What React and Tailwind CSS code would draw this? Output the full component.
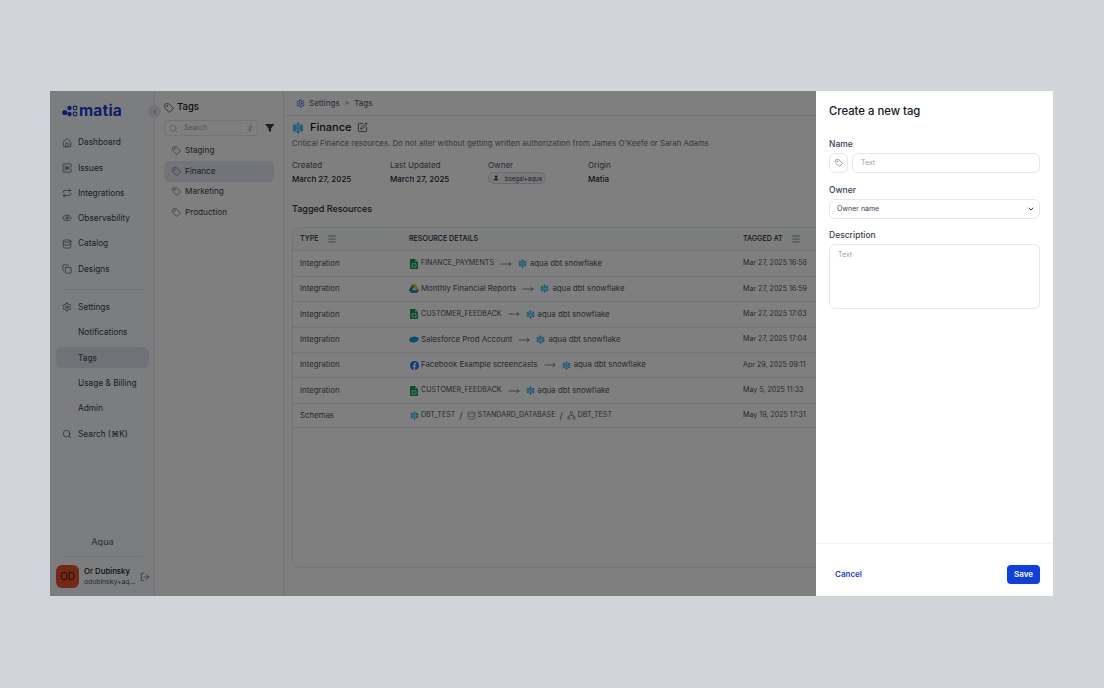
import { Home, ServerCog, Repeat, Eye, Database, Copy, Settings, Search, Tag, LogOut, SquarePen, Menu, MoveRight, ChevronLeft, ChevronDown, Network, User } from 'lucide-react'

const navTop = [
  { name: 'Dashboard', icon: Home },
  { name: 'Issues', icon: ServerCog },
  { name: 'Integrations', icon: Repeat },
  { name: 'Observability', icon: Eye },
  { name: 'Catalog', icon: Database },
  { name: 'Designs', icon: Copy },
]

const navBottom = [
  { name: 'Settings', icon: Settings },
  { name: 'Notifications' },
  { name: 'Tags', active: true },
  { name: 'Usage & Billing' },
  { name: 'Admin' },
  { name: 'Search (⌘K)', icon: Search },
]

const tags = ['Staging', 'Finance', 'Marketing', 'Production']

const rows = [
  { type: 'Integration', icon: 'sheets', name: 'FINANCE_PAYMENTS', caps: true, at: 'Mar 27, 2025 16:58' },
  { type: 'Integration', icon: 'drive', name: 'Monthly Financial Reports', at: 'Mar 27, 2025 16:59' },
  { type: 'Integration', icon: 'sheets', name: 'CUSTOMER_FEEDBACK', caps: true, at: 'Mar 27, 2025 17:03' },
  { type: 'Integration', icon: 'salesforce', name: 'Salesforce Prod Account', at: 'Mar 27, 2025 17:04' },
  { type: 'Integration', icon: 'facebook', name: 'Facebook Example screencasts', at: 'Apr 29, 2025 09:11' },
  { type: 'Integration', icon: 'sheets', name: 'CUSTOMER_FEEDBACK', caps: true, at: 'May 5, 2025 11:33' },
]

function SnowflakeIcon({ className }) {
  return (
    <svg viewBox="0 0 24 24" className={className} fill="none" stroke="#29b5e8" strokeWidth="3.2" strokeLinecap="round" strokeLinejoin="round">
      <path d="M12 2v6M12 16v6M3.300 7l5 3M15.700 14l5 3M3.300 17l5-3M15.700 10l5-3" />
      <path d="M12 10l2 2-2 2-2-2z" strokeWidth="1.800" />
      <path d="M8.500 4l3.500 3 3.500-3M8.500 20l3.500-3 3.500 3M2.500 11l4.500-1-1.500-4.500M21.500 13l-4.500 1 1.500 4.500M2.500 13l4.500 1-1.500 4.500M21.500 11l-4.500-1 1.500-4.500" strokeWidth="2" />
    </svg>
  )
}

function SourceIcon({ kind }) {
  if (kind === 'sheets') {
    return (
      <svg viewBox="0 0 16 20" className="w-[8px] h-[10px] shrink-0">
        <path d="M0 1.500A1.500 1.500 0 0 1 1.500 0H10l6 6v12.500a1.500 1.500 0 0 1-1.500 1.500h-13A1.500 1.500 0 0 1 0 18.500z" fill="#0f9d58" />
        <path d="M10 0l6 6h-6z" fill="#87ceac" />
        <path d="M4 9.500h8v6.500H4z" fill="none" stroke="#fff" strokeWidth="1.500" />
      </svg>
    )
  }
  if (kind === 'drive') {
    return (
      <svg viewBox="0 0 24 21" className="w-[10px] h-[9px] shrink-0">
        <path d="M8 0h8l8 14h-8z" fill="#ffba00" />
        <path d="M8 0l4 7-7.500 14L0 14z" fill="#00a85d" />
        <path d="M8 14h16l-4.500 7h-15z" fill="#2684fc" />
      </svg>
    )
  }
  if (kind === 'salesforce') {
    return (
      <svg viewBox="0 0 24 16" className="w-[10px] h-[7px] shrink-0">
        <path d="M10 2.500A4.500 4.500 0 0 1 17 2a5 5 0 0 1 2.500 9.800A3.600 3.600 0 0 1 14.500 13.500 4 4 0 0 1 7.500 14 3.800 3.800 0 0 1 2 11 4 4 0 0 1 3.500 4 4.500 4.500 0 0 1 10 2.500z" fill="#00a1e0" />
      </svg>
    )
  }
  return (
    <svg viewBox="0 0 20 20" className="w-[9px] h-[9px] shrink-0">
      <circle cx="10" cy="10" r="10" fill="#1877f2" />
      <path d="M13.500 12.800l.500-2.800h-2.700V8.200c0-.8.400-1.500 1.600-1.500H14V4.300s-1.100-.2-2.200-.2c-2.200 0-3.600 1.300-3.600 3.800V10H5.800v2.800h2.400V20h3.100v-7.200z" fill="#fff" />
    </svg>
  )
}

function Target() {
  return (
    <span className="flex items-center gap-[3px]">
      <SnowflakeIcon className="w-[9px] h-[9px]" />
      aqua dbt snowflake
    </span>
  )
}

function Sidebar() {
  const item = (n) => {
    const Icon = n.icon
    return (
      <div
        key={n.name}
        className={`h-[21px] mb-[4.300px] pl-[6px] rounded-md flex items-center gap-[6px] text-[8.300px] text-[#374151] ${n.active ? 'bg-[#e0e4f0]' : ''}`}
      >
        <span className="w-[10px] flex justify-center">
          {Icon && <Icon className="w-[10px] h-[10px]" strokeWidth={1.5} />}
        </span>
        {n.name}
      </div>
    )
  }
  return (
    <aside className="w-[105px] shrink-0 bg-[#f8fafc] border-r border-[#e5e7eb] flex flex-col pl-[6px] pr-[5px] relative">
      <div className="h-[40px] mb-[1px] flex items-center gap-[1px] pl-[6px]">
        <svg viewBox="0 0 16 12" className="w-[16px] h-[12px]" fill="#1d3fd1">
          <circle cx="2.800" cy="7.500" r="2.600" />
          <circle cx="7.500" cy="3" r="2.200" />
          <circle cx="7.500" cy="9" r="2.200" />
          <circle cx="13" cy="3" r="1.900" fill="none" stroke="#1d3fd1" strokeWidth="1.100" />
          <circle cx="13" cy="9" r="1.900" fill="none" stroke="#1d3fd1" strokeWidth="1.100" />
        </svg>
        <span className="text-[15.500px] font-bold leading-none text-[#1d3fd1] tracking-[0.2px]">matia</span>
      </div>
      <div>{navTop.map(item)}</div>
      <div className="h-px bg-[#e5e7eb] mx-[7px] mt-[5px] mb-[7px]" />
      <div>{navBottom.map(item)}</div>
      <div className="mt-auto flex flex-col">
        <div className="text-center text-[9px] font-medium text-[#6b7280] mb-[8px]">Aqua</div>
        <div className="h-px bg-[#e5e7eb] mx-[7px] mb-[8px]" />
        <div className="flex items-center gap-[5px] mb-[8px]">
          <div className="w-[23px] h-[23px] rounded-md bg-[#e6532a] flex items-center justify-center text-[10px] text-[#3f1206] shrink-0">OD</div>
          <div className="flex-1 leading-none whitespace-nowrap">
            <div className="text-[7.800px] text-[#111827] font-medium mb-[3px]">Or Dubinsky</div>
            <div className="text-[6.800px] text-[#4b5563]">odubinsky+aq...</div>
          </div>
          <LogOut className="w-[10px] h-[10px] text-[#374151] shrink-0" strokeWidth={1.5} />
        </div>
      </div>
      <div className="absolute right-[-7px] top-[14px] w-[13px] h-[13px] rounded-full bg-[#e5e7eb] flex items-center justify-center">
        <ChevronLeft className="w-[8px] h-[8px] text-[#4b5563]" />
      </div>
    </aside>
  )
}

function TagsPane() {
  return (
    <section className="w-[129px] shrink-0 bg-white border-r border-[#e5e7eb] pl-[9px] pr-[8px]">
      <div className="h-[31px] pt-[2px] flex items-center gap-[3px] text-[9.500px] font-medium text-[#111827]">
        <Tag className="w-[10px] h-[10px]" strokeWidth={1.5} />
        Tags
      </div>
      <div className="flex items-center gap-[7px] mb-[4px] -mt-[2px]">
        <div className="w-[98px] h-[16px] border border-[#e5e7eb] rounded flex items-center px-[4px] gap-[6px] text-[7px] text-[#9ca3af]">
          <Search className="w-[9px] h-[9px]" strokeWidth={1.5} />
          Search
          <span className="ml-auto text-[#6b7280] text-[7px] px-[2px] bg-[#f3f4f6]">/</span>
        </div>
        <svg viewBox="0 0 12 12" className="w-[10px] h-[10px]" fill="#374151">
          <path d="M0 1h12L7.500 6.500V11l-3-1.500v-3z" />
        </svg>
      </div>
      {tags.map((t) => (
        <div
          key={t}
          className={`h-[21px] w-[110px] rounded-md pl-[8px] flex items-center gap-[4px] text-[8.200px] text-[#374151] ${t === 'Finance' ? 'bg-[#e5e9f2]' : ''} mb-[-0.500px]`}
        >
          <Tag className="w-[9px] h-[9px]" strokeWidth={1.5} />
          {t}
        </div>
      ))}
    </section>
  )
}

function Table() {
  const rowCls = 'grid grid-cols-[109px_334px_1fr] items-center h-[25.400px] pl-[7px] border-t border-[#e5e7eb] text-[7.800px] text-[#4b5563]'
  return (
    <div className="w-[760px] h-[341px] border border-[#e5e7eb] rounded-lg overflow-hidden mt-[12px]">
      <div className="grid grid-cols-[109px_334px_1fr] items-center h-[22.400px] pl-[7px] bg-[#f9fafb] text-[7.100px] font-medium text-[#1f2937]">
        <span className="flex items-center gap-[8px]">TYPE <Menu className="w-[10px] h-[10px]" strokeWidth={1.25} /></span>
        <span>RESOURCE DETAILS</span>
        <span className="flex items-center gap-[8px]">TAGGED AT <Menu className="w-[10px] h-[10px]" strokeWidth={1.25} /></span>
      </div>
      {rows.map((r, i) => (
        <div key={i} className={rowCls}>
          <span>{r.type}</span>
          <span className="flex items-center gap-[2px]">
            <span className="w-[10px] flex justify-center"><SourceIcon kind={r.icon} /></span>
            <span className={r.caps ? 'text-[7.100px]' : ''}>{r.name}</span>
            <MoveRight className="w-[12px] h-[12px] mx-[4px] text-[#374151]" strokeWidth={1.25} />
            <Target />
          </span>
          <span className="text-[7.100px]">{r.at}</span>
        </div>
      ))}
      <div className={rowCls + ' border-b'}>
        <span>Schemas</span>
        <span className="flex items-center gap-[2px] text-[7.100px]">
          <span className="w-[10px] flex justify-center"><SnowflakeIcon className="w-[9px] h-[9px]" /></span>
          DBT_TEST
          <span className="text-[9px] mx-[2px]">/</span>
          <Database className="w-[9px] h-[9px]" strokeWidth={1.25} />
          STANDARD_DATABASE
          <span className="text-[9px] mx-[2px]">/</span>
          <Network className="w-[9px] h-[9px]" strokeWidth={1.25} />
          DBT_TEST
        </span>
        <span className="text-[7.100px]">May 19, 2025 17:31</span>
      </div>
    </div>
  )
}

function Main() {
  const meta = [
    ['Created', 'March 27, 2025'],
    ['Last Updated', 'March 27, 2025'],
  ]
  return (
    <main className="flex-1 min-w-0 bg-white">
      <div className="h-[25px] border-b border-[#e5e7eb] pl-[12px] flex items-center gap-[4px] text-[8px] text-[#4b5563]">
        <Settings className="w-[9px] h-[9px] text-[#1d3fd1]" strokeWidth={2} />
        Settings
        <span className="mx-[1px] text-[7px]">&gt;</span>
        Tags
      </div>
      <div className="px-[8px]">
        <div className="flex items-center gap-[5px] h-[22px] pt-[1px] text-[11px] font-medium text-[#111827]">
          <SnowflakeIcon className="w-[12px] h-[12px] mr-[1px]" />
          Finance
          <SquarePen className="w-[11px] h-[11px]" strokeWidth={1.5} />
        </div>
        <p className="text-[7.800px] text-[#6b7280] leading-[10px] whitespace-nowrap">Critical Finance resources. Do not alter without getting written authorization from James O'Keefe or Sarah Adams</p>
        <div className="grid grid-cols-[98px_98px_100px_1fr] w-[420px] mt-[12px] text-[8px] leading-[11px]">
          {meta.map(([k, v]) => (
            <div key={k}>
              <div className="text-[#4b5563]">{k}</div>
              <div className="mt-[3px] font-medium text-[#1f2937]">{v}</div>
            </div>
          ))}
          <div>
            <div className="text-[#4b5563]">Owner</div>
            <div className="mt-[1px] w-[58px] h-[12px] rounded-full border border-[#d1d5db] bg-[#f3f4f6] flex items-center pl-[4px] gap-[6px] text-[6px] text-[#374151]">
              <User className="w-[6px] h-[6px] text-[#1e293b]" fill="#1e293b" />
              bsegal+aqua
            </div>
          </div>
          <div>
            <div className="text-[#4b5563]">Origin</div>
            <div className="mt-[3px] font-medium text-[#1f2937]">Matia</div>
          </div>
        </div>
        <h2 className="text-[9px] font-medium text-[#1f2937] mt-[18px] leading-[12px]">Tagged Resources</h2>
        <Table />
      </div>
    </main>
  )
}

function Drawer() {
  const label = 'block text-[8.500px] font-medium text-[#374151] leading-[11px] mb-[3px]'
  const box = 'border border-[#e5e7eb] rounded-md bg-white'
  return (
    <aside className="absolute right-0 top-0 bottom-0 w-[237px] bg-white flex flex-col">
      <div className="flex-1 px-[13px]">
        <h2 className="text-[11.300px] font-medium text-[#111827] leading-[14px] mt-[13px] mb-[21px]">Create a new tag</h2>
        <label className={label}>Name</label>
        <div className="flex gap-[4px] mb-[12px]">
          <div className={`${box} w-[19px] h-[20px] flex items-center justify-center text-[#374151]`}>
            <Tag className="w-[8px] h-[8px]" strokeWidth={1.5} />
          </div>
          <div className={`${box} flex-1 h-[20px] flex items-center pl-[8px] text-[7px] text-[#9ca3af]`}>Text</div>
        </div>
        <label className={label}>Owner</label>
        <div className={`${box} h-[20px] flex items-center justify-between pl-[7px] pr-[4px] text-[7px] text-[#374151] mb-[11px]`}>
          Owner name
          <ChevronDown className="w-[8px] h-[8px] text-[#111827]" strokeWidth={2.5} />
        </div>
        <label className={label}>Description</label>
        <div className={`${box} h-[65px] pl-[8px] pt-[5px] text-[7px] leading-[10px] text-[#9ca3af]`}>Text</div>
      </div>
      <div className="h-[53px] border-t border-[#f3f4f6] flex items-center justify-between pl-[19px] pr-[13px] pt-[8px]">
        <span className="text-[8px] font-semibold text-[#1d3fd1]">Cancel</span>
        <button className="w-[33px] h-[19px] rounded bg-[#0f3fdc] text-white text-[8px] font-semibold">Save</button>
      </div>
    </aside>
  )
}

export default function App() {
  return (
    <div className="w-[1104px] h-[688px] bg-[#d1d5d9] pl-[50px] pt-[91px]" style={{ fontFamily: 'Inter, "Open Sans", sans-serif' }}>
      <div className="relative w-[1003px] h-[505px] flex overflow-hidden bg-white">
        <Sidebar />
        <TagsPane />
        <Main />
        <div className="absolute inset-0 bg-black/50" />
        <Drawer />
      </div>
    </div>
  )
}
